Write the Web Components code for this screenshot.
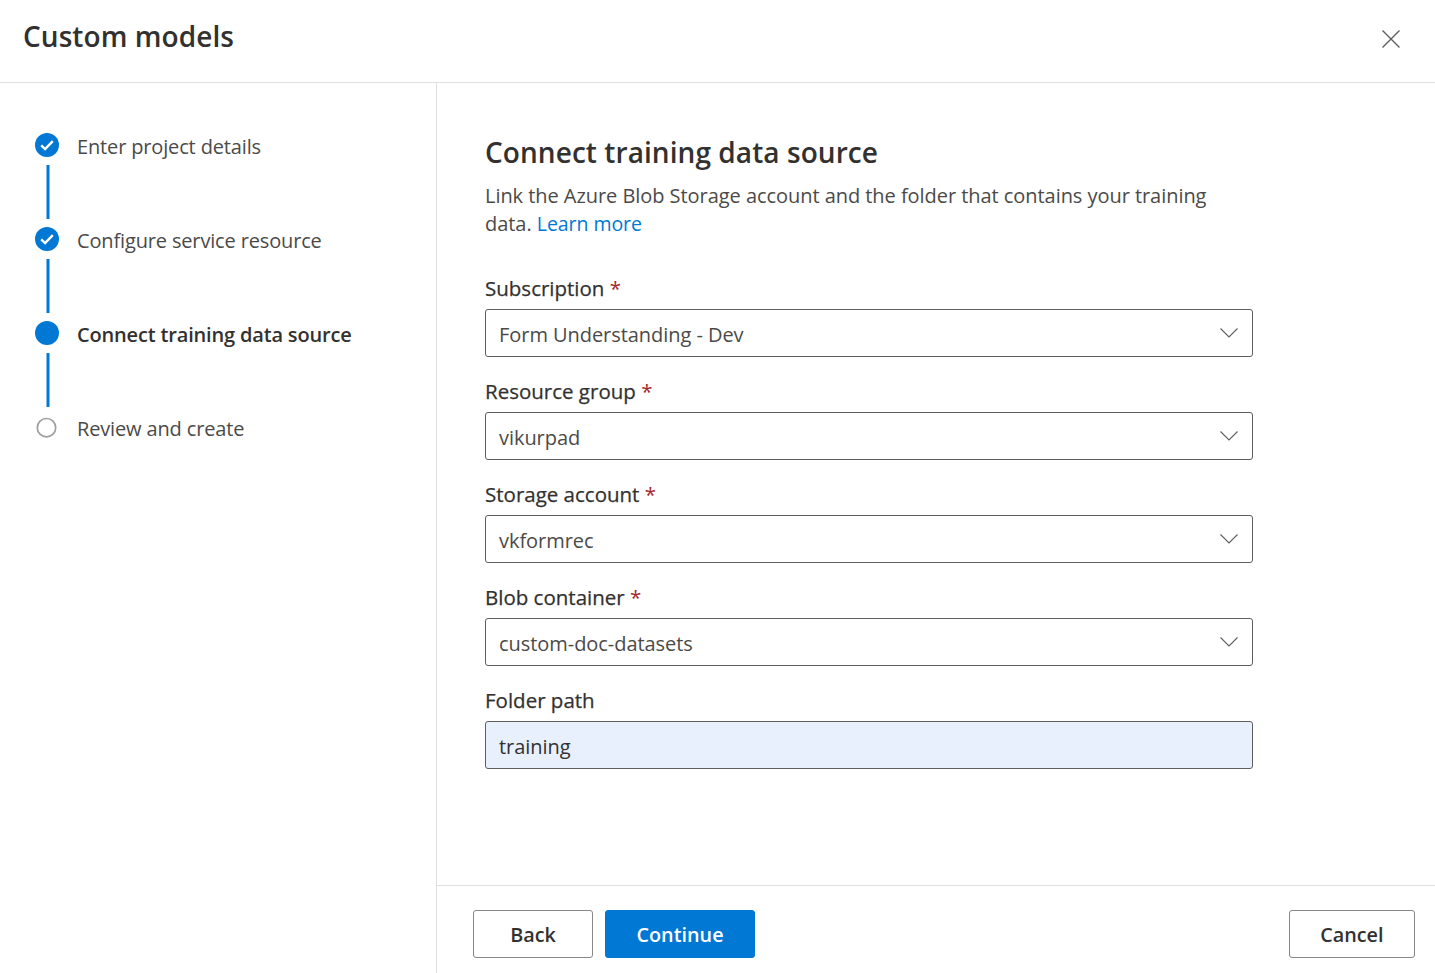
<!DOCTYPE html>
<html lang="en">
<head>
<meta charset="utf-8">
<title>Custom models</title>
<style>
  html, body { margin: 0; height: 100%; background: #fff; }
  body { font-family: "Open Sans", "Noto Sans", sans-serif; color: #323130; }
</style>
</head>
<body>
<model-dialog heading="Custom models">
  <wizard-steps slot="nav">
    <wizard-step state="done">Enter project details</wizard-step>
    <wizard-step state="done">Configure service resource</wizard-step>
    <wizard-step state="current">Connect training data source</wizard-step>
    <wizard-step state="todo" last>Review and create</wizard-step>
  </wizard-steps>

  <source-form>
    <form-field label="Subscription" required value="Form Understanding - Dev"></form-field>
    <form-field label="Resource group" required value="vikurpad"></form-field>
    <form-field label="Storage account" required value="vkformrec"></form-field>
    <form-field label="Blob container" required value="custom-doc-datasets"></form-field>
    <form-field label="Folder path" value="training" filled></form-field>
  </source-form>

  <action-button slot="actions">Back</action-button>
  <action-button slot="actions" primary>Continue</action-button>
  <action-button slot="end">Cancel</action-button>
</model-dialog>

<script>
  class ModelDialog extends HTMLElement {
    connectedCallback() {
      if (this.shadowRoot) return;
      const root = this.attachShadow({ mode: 'open' });
      root.innerHTML = `
        <style>
          :host { display: flex; flex-direction: column; height: 973px; overflow: hidden; }
          * { box-sizing: border-box; }
          header {
            display: flex;
            align-items: center;
            justify-content: space-between;
            flex: 0 0 83px;
            padding: 0 32px 11px 23px;
            border-bottom: 1px solid #e1dfdd;
          }
          h1 { margin: 0; font-size: 28px; font-weight: 600; letter-spacing: .07px; line-height: 36px; color: #323130; }
          .close { display: block; width: 24px; height: 24px; margin-top: 7px; }
          .body { flex: 1; display: grid; grid-template-columns: 437px 1fr; min-height: 0; }
          nav { border-right: 1px solid #e1dfdd; padding: 50px 0 0 35px; }
          .main { display: flex; flex-direction: column; min-width: 0; }
          .content { flex: 1; padding: 49px 182px 0 48px; }
          footer {
            flex: 0 0 88px;
            display: flex;
            align-items: flex-start;
            justify-content: space-between;
            padding: 24px 20px 0 36px;
            border-top: 1px solid #e1dfdd;
          }
          .actions { display: flex; gap: 12px; }
        </style>
        <header>
          <h1>${this.getAttribute('heading')}</h1>
          <svg class="close" viewBox="0 0 24 24" fill="none" stroke="#605e5c" stroke-width="1.4" aria-hidden="true"><path d="M3.500 3.500l17 17M20.500 3.500l-17 17"/></svg>
        </header>
        <div class="body">
          <nav><slot name="nav"></slot></nav>
          <div class="main">
            <div class="content"><slot></slot></div>
            <footer>
              <div class="actions"><slot name="actions"></slot></div>
              <slot name="end"></slot>
            </footer>
          </div>
        </div>
      `;
    }
  }

  class WizardSteps extends HTMLElement {
    connectedCallback() {
      if (this.shadowRoot) return;
      const root = this.attachShadow({ mode: 'open' });
      root.innerHTML = `
        <style>:host { display: flex; flex-direction: column; }</style>
        <slot></slot>
      `;
    }
  }

  class WizardStep extends HTMLElement {
    connectedCallback() {
      if (this.shadowRoot) return;
      const state = this.getAttribute('state');
      const marks = {
        done: '<circle cx="12" cy="12" r="12" fill="#0078d4"/><path d="M6.200 12.400l3.900 3.700 7.700-7.900" fill="none" stroke="#fff" stroke-width="2.400"/>',
        current: '<circle cx="12" cy="12" r="12" fill="#0078d4"/>',
        todo: '<circle cx="11.500" cy="12.700" r="9.200" fill="#fff" stroke="#a19f9d" stroke-width="1.700"/>'
      };
      const root = this.attachShadow({ mode: 'open' });
      root.innerHTML = `
        <style>
          :host { display: grid; grid-template-columns: 24px 1fr; column-gap: 18px; height: 94px; }
          :host([last]) { height: auto; }
          svg { display: block; width: 24px; height: 24px; }
          .mark { display: flex; flex-direction: column; align-items: center; }
          .line { width: 3px; height: 54px; margin-top: 8px; background: #0078d4; transform: translateX(0.5px); }
          :host([last]) .line { display: none; }
          .text { font-size: 20px; letter-spacing: -.15px; line-height: 28px; color: #4b4a48; white-space: nowrap; }
          :host([state="current"]) .text { font-weight: 600; letter-spacing: -.17px; color: #323130; }
        </style>
        <div class="mark">
          <svg viewBox="0 0 24 24" aria-hidden="true">${marks[state]}</svg>
          <div class="line"></div>
        </div>
        <div class="text"><slot></slot></div>
      `;
    }
  }

  class SourceForm extends HTMLElement {
    connectedCallback() {
      if (this.shadowRoot) return;
      const root = this.attachShadow({ mode: 'open' });
      root.innerHTML = `
        <style>
          :host { display: block; }
          h2 { margin: 0; font-size: 28px; font-weight: 600; letter-spacing: .07px; line-height: 40px; color: #323130; }
          p { margin: 10px 0 0; font-size: 20px; letter-spacing: -.05px; line-height: 28px; color: #4b4a48; }
          a { color: #0078d4; font-size: 19.5px; text-decoration: none; }
          .fields { display: flex; flex-direction: column; gap: 15px; margin-top: 31px; }
        </style>
        <h2>Connect training data source</h2>
        <p>Link the Azure Blob Storage account and the folder that contains your training data. <a href="#">Learn more</a></p>
        <div class="fields"><slot></slot></div>
      `;
    }
  }

  class FormField extends HTMLElement {
    connectedCallback() {
      if (this.shadowRoot) return;
      const isSelect = !this.hasAttribute('filled');
      const root = this.attachShadow({ mode: 'open' });
      root.innerHTML = `
        <style>
          :host { display: block; }
          * { box-sizing: border-box; }
          label { display: block; height: 40px; padding-top: 5px; font-size: 20.5px; font-weight: 500; line-height: 28px; color: #323130; -webkit-text-stroke: .25px #323130; }
          .req { color: #a4262c; font-weight: 400; -webkit-text-stroke: 0; }
          .box {
            display: flex;
            align-items: center;
            justify-content: space-between;
            height: 48px;
            padding: 2px 13px 0 13px;
            border: 1px solid #605e5c;
            border-radius: 3px;
            font-size: 20px;
            letter-spacing: -.05px;
            color: #4b4a48;
            background: #fff;
          }
          :host([filled]) .box { background: #e8f0fe; color: #323130; }
          svg { display: block; width: 20px; height: 20px; }
        </style>
        <label>${this.getAttribute('label')}${this.hasAttribute('required') ? ' <span class="req">*</span>' : ''}</label>
        <div class="box">
          <span>${this.getAttribute('value')}</span>
          ${isSelect ? '<svg viewBox="0 0 20 20" fill="none" stroke="#605e5c" stroke-width="1.1" aria-hidden="true"><path d="M1.500 4.500l8.500 8.500 8.500-8.500"/></svg>' : ''}
        </div>
      `;
    }
  }

  class ActionButton extends HTMLElement {
    connectedCallback() {
      if (this.shadowRoot) return;
      const root = this.attachShadow({ mode: 'open' });
      root.innerHTML = `
        <style>
          :host { display: inline-block; }
          button {
            display: block;
            box-sizing: border-box;
            min-width: 120px;
            height: 48px;
            padding: 0 30.5px;
            border: 1px solid #8a8886;
            border-radius: 3px;
            font: 600 19.8px "Open Sans", "Noto Sans", sans-serif;
            color: #323130;
            background: #fff;
          }
          :host([primary]) button { border-color: #0078d4; color: #fff; background: #0078d4; }
        </style>
        <button type="button"><slot></slot></button>
      `;
    }
  }

  customElements.define('model-dialog', ModelDialog);
  customElements.define('wizard-steps', WizardSteps);
  customElements.define('wizard-step', WizardStep);
  customElements.define('source-form', SourceForm);
  customElements.define('form-field', FormField);
  customElements.define('action-button', ActionButton);
</script>
</body>
</html>
